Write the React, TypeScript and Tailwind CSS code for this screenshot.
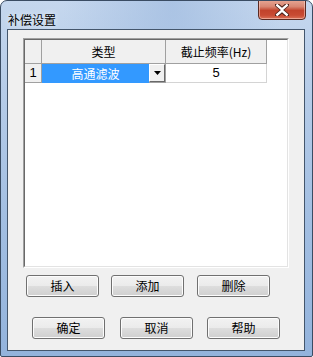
export default function App() {
  const cjk = "font-['Noto_Sans_CJK_SC','Liberation_Sans',sans-serif]";
  const btn =
    "w-[73px] h-[22px] rounded-[3px] border border-[#707070] bg-[linear-gradient(to_bottom,#f2f2f2_0%,#ebebeb_48%,#dddddd_52%,#cfcfcf_100%)] flex items-center justify-center text-[12px] leading-none text-black shadow-[inset_0_0_0_1px_#fcfcfc] " +
    cjk;
  return (
    <div className="w-[313px] h-[357px] bg-white">
      <div className="relative w-[313px] h-[357px] rounded-t-[7px] rounded-b-[2px] border border-[#3a4c63] bg-[linear-gradient(to_bottom,#c5d7ee_0%,#b6cce8_25%,#a3bfe2_60%,#93b3dc_100%)] flex flex-col overflow-hidden">
        <div className="absolute inset-0 bg-[radial-gradient(ellipse_at_55%_0%,rgba(150,180,220,0.55)_0%,rgba(255,255,255,0)_45%)] pointer-events-none" />
        {/* Title bar */}
        <div className="relative h-[28px] pl-[7px] pt-[6px]">
          <span
            className={
              "text-[12px] leading-[16px] text-black [text-shadow:0_0_6px_rgba(255,255,255,0.9)] " +
              cjk
            }
          >
            补偿设置
          </span>
          <div className="absolute left-[257px] top-[-2px] w-[48px] h-[21px] rounded-b-[4px] border border-[#5a2a22] bg-[linear-gradient(to_bottom,#e7a795_0%,#d88672_35%,#c2432c_55%,#c84b33_80%,#da7158_100%)] shadow-[inset_0_0_0_1px_rgba(255,220,210,0.5)] flex items-center justify-center">
            <svg width="14" height="12" viewBox="0 0 14 12">
              <path
                d="M2 1 L7 5.2 L12 1 M2 11 L7 6.8 L12 11"
                stroke="#4a1f18"
                strokeWidth="4.2"
                fill="none"
                strokeLinecap="square"
              />
              <path
                d="M2.3 1.3 L7 5.3 L11.7 1.3 M2.3 10.7 L7 6.7 L11.7 10.7"
                stroke="#ffffff"
                strokeWidth="2.4"
                fill="none"
                strokeLinecap="square"
              />
            </svg>
          </div>
        </div>
        {/* Client area */}
        <div className="relative ml-[6px] mr-[7px] h-[322px] border border-[#44566c] bg-[#f0f0f0] flex flex-col">
          {/* Grid */}
          <div className="ml-[15px] mt-[8px] w-[266px] h-[230px] border border-t-[#a0a0a0] border-l-[#a0a0a0] border-r-[#ffffff] border-b-[#ffffff]">
            <div className="w-full h-full border border-t-[#696969] border-l-[#696969] border-r-[#e3e3e3] border-b-[#e3e3e3] bg-white">
              {/* header row */}
              <div className="flex h-[24px]">
                <div className="w-[17px] h-[24px] bg-[#f0f0f0] border-r border-b border-[#a0a0a0]" />
                <div
                  className={
                    "w-[124px] h-[24px] bg-[#f0f0f0] border-r border-b border-[#a0a0a0] flex items-center justify-center text-[12px] text-black " +
                    cjk
                  }
                >
                  类型
                </div>
                <div
                  className={
                    "w-[101px] h-[24px] bg-[#f0f0f0] border-r border-b border-[#a0a0a0] flex items-center justify-center text-[12px] text-black " +
                    cjk
                  }
                >
                  截止频率(Hz)
                </div>
              </div>
              {/* data row */}
              <div className="flex h-[19px]">
                <div className="w-[17px] h-[19px] bg-[#f0f0f0] border-r border-b border-[#a0a0a0] flex items-center justify-center text-[13px] text-black font-['Liberation_Sans',sans-serif]">
                  1
                </div>
                <div
                  className={
                    "w-[107px] h-[19px] bg-[#3399ff] flex items-center justify-center text-[12px] text-white " +
                    cjk
                  }
                >
                  高通滤波
                </div>
                <div className="w-[17px] h-[19px] bg-white border-r border-b border-[#a0a0a0] flex">
                  <div className="w-full h-full border border-t-[#ffffff] border-l-[#ffffff] border-r-[#696969] border-b-[#696969] bg-[#f0f0f0] flex items-center justify-center">
                    <svg width="7" height="4" viewBox="0 0 7 4">
                      <path d="M0 0 H7 L3.5 4 Z" fill="#000" />
                    </svg>
                  </div>
                </div>
                <div className="w-[101px] h-[19px] bg-white border-r border-b border-[#d4d4d4] flex items-center justify-center text-[13px] text-black font-['Liberation_Sans',sans-serif]">
                  5
                </div>
              </div>
            </div>
          </div>
          {/* Button row 1 */}
          <div className="flex mt-[7px]">
            <div className={btn + " ml-[18px]"}>插入</div>
            <div className={btn + " ml-[12px]"}>添加</div>
            <div className={btn + " ml-[13px]"}>删除</div>
          </div>
          {/* Button row 2 */}
          <div className="flex mt-[20px]">
            <div className={btn + " ml-[24px]"}>确定</div>
            <div className={btn + " ml-[15px]"}>取消</div>
            <div className={btn + " ml-[14px]"}>帮助</div>
          </div>
        </div>
      </div>
    </div>
  );
}
